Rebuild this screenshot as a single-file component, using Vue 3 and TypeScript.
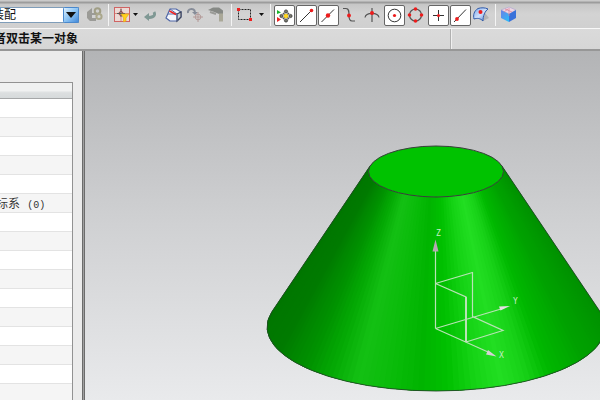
<script setup lang="ts">
import { ref } from 'vue'

interface Stop { angle: number; rgb: [number, number, number] }
interface Row { name: string; count: string }

const scope = ref('装配')
const rows: Row[] = Array.from({ length: 16 }, (_, i) =>
  i === 5 ? { name: '标系', count: '(0)' } : { name: '', count: '' },
)

const top = { cx: 436, cy: 171.5, rx: 67.5, ry: 25.5 }
const base = { cx: 436, cy: 327, rx: 169, ry: 64 }

// Surface shade by angle around the cone, from the right silhouette to the left.
const stops: Stop[] = [
  { angle: -20, rgb: [0, 140, 0] },
  { angle: 10, rgb: [0, 150, 0] },
  { angle: 30, rgb: [0, 162, 0] },
  { angle: 48, rgb: [0, 184, 0] },
  { angle: 58, rgb: [24, 210, 24] },
  { angle: 67, rgb: [34, 222, 34] },
  { angle: 76, rgb: [22, 212, 22] },
  { angle: 86, rgb: [0, 192, 0] },
  { angle: 95, rgb: [0, 180, 0] },
  { angle: 106, rgb: [10, 188, 10] },
  { angle: 118, rgb: [20, 192, 20] },
  { angle: 128, rgb: [4, 170, 4] },
  { angle: 140, rgb: [0, 145, 0] },
  { angle: 158, rgb: [0, 122, 0] },
  { angle: 200, rgb: [0, 116, 0] },
]

function shade(angle: number): string {
  const i = Math.max(1, stops.findIndex((s) => s.angle >= angle))
  const a = stops[i - 1]
  const b = stops[i]
  const t = (angle - a.angle) / (b.angle - a.angle)
  return `rgb(${a.rgb.map((v, k) => Math.round(v + (b.rgb[k] - v) * t)).join(',')})`
}

function at(e: typeof top, deg: number): string {
  const r = (deg * Math.PI) / 180
  return `${(e.cx + e.rx * Math.cos(r)).toFixed(2)},${(e.cy + e.ry * Math.sin(r)).toFixed(2)}`
}

// Each facet reaches under the next ones, so no background shows between them.
const facets: { points: string; fill: string }[] = []
for (let a = -14; a < 194; a += 2) {
  const end = Math.min(a + 6, 194)
  const outer: string[] = []
  for (let b = a; b <= end; b += 2) outer.push(at(base, b))
  facets.push({
    points: [at(top, a), ...outer, at(top, end)].join(' '),
    fill: shade(a + 1),
  })
}

const rim: string[] = []
for (let a = -14; a <= 194; a += 8) rim.push(at(base, a))
const outline = [at(top, -14), ...rim, at(top, 194)].join(' ')
</script>

<template>
  <div class="app">
    <header class="toolbar">
      <div class="combo">
        <select v-model="scope" aria-label="范围">
          <option>装配</option>
        </select>
        <svg class="drop" viewBox="0 0 16 16" aria-hidden="true">
          <defs>
            <linearGradient id="dropFill" x1="0" y1="0" x2="1" y2="1">
              <stop offset="0" stop-color="#e4f4ff" /><stop offset=".5" stop-color="#8cc4f4" /><stop offset="1" stop-color="#3f86d8" />
            </linearGradient>
          </defs>
          <rect x=".5" y=".5" width="15" height="15" rx="1" fill="url(#dropFill)" stroke="#4a88cc" />
          <path d="M3 5h10L8 11z" fill="#111" />
        </svg>
      </div>

      <button class="tool first" aria-label="组件">
        <svg viewBox="0 0 22 22"><path d="M3 8l5-4v5h4v2H8v3h4v3H6l-3-3z" fill="#9b9b97" /><g fill="none"><circle cx="13.500" cy="7" r="2.800" stroke="#a09e86" stroke-width="2" /><circle cx="15" cy="12.500" r="2.600" stroke="#aaa78c" stroke-width="2" /></g></svg>
      </button>
      <i class="sep"></i>
      <button class="tool" aria-label="选择过滤器">
        <svg viewBox="0 0 22 22"><rect x="3.500" y="3.500" width="15" height="14" fill="#ecd9d5" stroke="#cf6464" /><path d="M10 4v13M4 9.500h14" stroke="#d98a80" /><circle cx="10" cy="9.500" r="2" fill="none" stroke="#a44" /><path d="M10 5v8M6 9.500h8" stroke="#555" /><path d="M10 10h8l-3 4v3l-2.500 1v-4z" fill="#ffd21c" stroke="#e0a81a" stroke-width=".6" /></svg>
      </button>
      <button class="caret near" aria-label="更多过滤器"><svg viewBox="0 0 6 6"><path d="M0 1h5L2.500 4z" fill="#111" /></svg></button>
      <button class="tool" aria-label="返回">
        <svg viewBox="0 0 22 22"><path d="M15 8c2 4-1 5.500-7 5.500" fill="none" stroke="#7f9894" stroke-width="2.800" /><path d="M10 9v8l-5-4z" fill="#7f9894" /></svg>
      </button>
      <button class="tool apart" aria-label="面选择">
        <svg viewBox="0 0 22 22"><path d="M7 5l6 0 5 3v5l-4 4H7l-4-3z" fill="#f4f6fb" stroke="#5168a8" stroke-width="1.200" stroke-linejoin="round" /><path d="M14 10l4-2v5l-4 4z" fill="#c6cad2" stroke="#3e4457" stroke-width="1.200" /><path d="M5 10l9 0M7 5l7 5v7" fill="none" stroke="#5b6ea8" /><path d="M6.500 7l6.500 3.500" stroke="#e22" stroke-width="1.600" /></svg>
      </button>
      <button class="tool" aria-label="移动点">
        <svg viewBox="0 0 22 22"><path d="M3 9c-1-4 6-6 7-1" fill="none" stroke="#868c98" stroke-width="2" /><path d="M7 8h6l-3 3z" fill="#868c98" /><g fill="none" stroke="#b49a98"><circle cx="13" cy="13" r="2.800" /><path d="M13 8v10M8 13h10" /></g></svg>
      </button>
      <button class="tool" aria-label="应用样式">
        <svg viewBox="0 0 22 22"><path d="M1 6l5-2.500h6l4 3V10h-4L6 7.500z" fill="#868985" /><path d="M3 8l6 2" stroke="#9a9b97" stroke-width="2" /><path d="M12 9.500h4v8h-4z" fill="#aaa898" /></svg>
      </button>
      <i class="sep"></i>
      <button class="tool" aria-label="矩形选择">
        <svg viewBox="0 0 22 22"><rect x="4.500" y="5.500" width="12" height="10" fill="none" stroke="#222" stroke-dasharray="2 1" /><path d="M3 4h3v3H3zM15 14h3v3h-3z" fill="#ee2020" /></svg>
      </button>
      <button class="caret" aria-label="选择方式"><svg viewBox="0 0 6 6"><path d="M0 1h5L2.500 4z" fill="#111" /></svg></button>
      <i class="sep"></i>
      <button class="tool on" aria-label="启用捕捉点" aria-pressed="true">
        <svg viewBox="0 0 22 22"><path d="M4 6l4 2.500L4 10z" fill="#19b52c" /><path d="M4 13l4 2.500L4 18z" fill="#ec2222" /><g fill="#77776c" stroke="#333" stroke-width=".8"><circle cx="13" cy="7.500" r="1.600" /><circle cx="13" cy="16.500" r="1.600" /><circle cx="8.500" cy="12" r="1.600" /><circle cx="17.500" cy="12" r="1.600" /></g><path d="M10 9l6 6M16 9l-6 6" stroke="#555" stroke-width="1.600" /><circle cx="13" cy="12" r="2.200" fill="#ffd51e" /></svg>
      </button>
      <button class="tool on" aria-label="端点" aria-pressed="true">
        <svg viewBox="0 0 22 22"><path d="M5 18L16 7" stroke="#333" /><circle cx="16.500" cy="6.500" r="1.800" fill="#ed1c1c" /></svg>
      </button>
      <button class="tool on" aria-label="中点" aria-pressed="true">
        <svg viewBox="0 0 22 22"><path d="M4.500 18L17 5.500" stroke="#333" /><circle cx="11" cy="11.500" r="2.200" fill="#ed1c1c" /></svg>
      </button>
      <button class="tool" aria-label="控制点">
        <svg viewBox="0 0 22 22"><path d="M4 4.500h3c3 0 3 3 3 7s1 5.500 3 5.500h3" fill="none" stroke="#555" stroke-width="1.200" /><circle cx="10" cy="11.500" r="1.900" fill="#ed1c1c" /></svg>
      </button>
      <button class="tool" aria-label="交点">
        <svg viewBox="0 0 22 22"><path d="M11 4v14M4 13.500c1-5.500 13-5.500 14 0" fill="none" stroke="#555" stroke-width="1.200" /><circle cx="11" cy="9" r="2" fill="#ed1c1c" /></svg>
      </button>
      <button class="tool on" aria-label="圆弧中心" aria-pressed="true">
        <svg viewBox="0 0 22 22"><circle cx="11.500" cy="11.500" r="6.300" fill="none" stroke="#333" /><circle cx="11.500" cy="11.500" r="1.600" fill="#ed1c1c" /></svg>
      </button>
      <button class="tool" aria-label="象限点">
        <svg viewBox="0 0 22 22"><circle cx="10.500" cy="11" r="6" fill="none" stroke="#555" stroke-width="1.200" /><g fill="#ed1c1c"><circle cx="10.500" cy="5" r="1.800" /><circle cx="10.500" cy="17" r="1.800" /><circle cx="4.500" cy="11" r="1.800" /><circle cx="16.500" cy="11" r="1.800" /></g></svg>
      </button>
      <button class="tool on" aria-label="现有点" aria-pressed="true">
        <svg viewBox="0 0 22 22"><path d="M11.500 6v11M6 11.500h11" stroke="#333" /><circle cx="11.500" cy="11.500" r="1.500" fill="#ed1c1c" /></svg>
      </button>
      <button class="tool on" aria-label="曲线上的点" aria-pressed="true">
        <svg viewBox="0 0 22 22"><path d="M5 18L17 5.500" stroke="#333" /><circle cx="8" cy="15" r="1.900" fill="#ed1c1c" /></svg>
      </button>
      <button class="tool" aria-label="面上的点">
        <svg viewBox="0 0 22 22">
          <defs><linearGradient id="face" x1="0" y1="0" x2="1" y2="1"><stop offset="0" stop-color="#7ba9ed" /><stop offset=".5" stop-color="#cfe0fb" /><stop offset="1" stop-color="#4476ce" /></linearGradient></defs>
          <path d="M12 17l6-3-4-5z" fill="#b4b4b4" /><path d="M7 4.500c3-1 7-1 10 .5-3 2-5 7-5 12-3-3-6-3-9-2-1-4 0-8 4-10.500z" fill="url(#face)" stroke="#315aa8" /><circle cx="9.500" cy="8" r="2" fill="#ed1c1c" />
        </svg>
      </button>
      <i class="sep"></i>
      <button class="tool" aria-label="实体">
        <svg viewBox="0 0 22 22">
          <defs><linearGradient id="side" x1="0" y1="0" x2="1" y2="1"><stop offset="0" stop-color="#6c7fe4" /><stop offset="1" stop-color="#27c0fb" /></linearGradient></defs>
          <path d="M3 6l8-3 7 3-7 4z" fill="#eed6e2" stroke="#a7a1d0" stroke-width=".6" /><path d="M3 6l8 4v8l-8-4z" fill="url(#side)" /><path d="M18 6l-7 4v8l7-4z" fill="#3a72da" /><path d="M11 4v8M7 5l7 3M6 8l4-3" fill="none" stroke="#de7d92" stroke-width=".7" />
        </svg>
      </button>
    </header>

    <div class="prompt">
      <p class="cue">者双击某一对象</p>
      <p class="status"></p>
    </div>

    <main class="work">
      <aside class="navigator">
        <table aria-label="部件导航器">
          <thead><tr><th scope="col"></th></tr></thead>
          <tbody>
            <tr v-for="(row, i) in rows" :key="i">
              <td><template v-if="row.name">{{ row.name }} <span class="count">{{ row.count }}</span></template></td>
            </tr>
          </tbody>
        </table>
      </aside>
      <section class="viewport">
        <svg class="scene" viewBox="85 51 515 349" preserveAspectRatio="xMinYMin slice" role="img" aria-label="圆锥体">
          <polygon v-for="(f, i) in facets" :key="i" :points="f.points" :fill="f.fill" />
          <polyline :points="outline" fill="none" stroke="#234a27" stroke-width=".9" />
          <ellipse :cx="top.cx" :cy="top.cy" :rx="top.rx" :ry="top.ry" fill="#00c200" stroke="#383f3a" stroke-width="1" />
          <g class="frame">
            <path d="M435.500 328.500V250M435.500 328.500L501 309M435.500 328.500L488 352M435.500 283.500L472.500 272.500V316.500L503 330.500L466 342V297L435.500 283.500" />
            <path class="thick" d="M466 342V297" />
          </g>
          <path d="M435.500 239.500l3 12h-6z" fill="#b7a9b3" />
          <path d="M510 306l-9.500 4.500-1.500-4z" fill="#e6dfe4" />
          <path d="M496.500 356.500l-10.500-2 2-4.500z" fill="#d8d0d6" />
          <g class="axis">
            <text x="436" y="236">Z</text>
            <text x="513" y="304">Y</text>
            <text x="499" y="358">X</text>
          </g>
        </svg>
      </section>
    </main>
  </div>
</template>

<style>
body {
  margin: 0;
}
</style>

<style scoped>
.app {
  display: flex;
  flex-direction: column;
  height: 100vh;
  overflow: hidden;
  background: #d8d8d8;
  color: #111;
  font: 12px/18px "Liberation Sans", "Noto Sans CJK SC", sans-serif;
}

.toolbar {
  display: flex;
  flex: none;
  align-items: center;
  box-sizing: border-box;
  height: 28px;
  padding-top: 2px;
  background: linear-gradient(#cacaca 0 1px, #b4b4b4 1px 2px, #9c9c9c 2px 3px, #c6c6c6 4px, #d3d3d3 14px, #d0d0d0 27px);
}

.combo {
  position: relative;
  flex: none;
  width: 79px;
  height: 16px;
}

.combo select {
  display: block;
  box-sizing: border-box;
  width: 100%;
  height: 16px;
  padding: 0;
  border: 1px solid #7f9db9;
  border-left: 0;
  appearance: none;
  background: #fff;
  color: #111;
  font: inherit;
  line-height: 14px;
  text-indent: -8px;
}

.drop {
  position: absolute;
  top: 0;
  right: 0;
  width: 16px;
  height: 16px;
  pointer-events: none;
}

button {
  flex: none;
  box-sizing: border-box;
  padding: 0;
  border: 0;
  background: none;
}

.tool {
  position: relative;
  width: 22px;
  height: 22px;
}

.tool svg {
  position: relative;
  display: block;
  width: 22px;
  height: 22px;
}

.tool.on::before {
  content: "";
  position: absolute;
  inset: 1px 0 0 1px;
  border: 1px solid #666;
  border-radius: 2px;
  background: #fff;
}

.first {
  margin-left: 5px;
}

.apart {
  margin-left: 2px;
}

.caret {
  display: flex;
  align-items: center;
  justify-content: center;
  width: 12px;
  height: 20px;
}

.caret.near {
  width: 6px;
}

.caret svg {
  width: 6px;
  height: 6px;
}

.sep {
  flex: none;
  box-sizing: border-box;
  width: 5px;
  height: 22px;
  border: solid transparent;
  border-width: 0 2px;
  background: #f4f4f4;
  background-clip: padding-box;
}

.prompt {
  display: grid;
  flex: none;
  grid-template-columns: 1fr 149px;
  box-sizing: border-box;
  height: 23px;
  border-top: 1px solid #f8f8f8;
  border-bottom: 2px solid #979797;
  background: linear-gradient(#dadada, #d6d6d6);
}

.prompt p {
  margin: 0;
}

.cue {
  overflow: hidden;
  border-right: 1px solid #b0b0b0;
  font-weight: bold;
  line-height: 20px;
  white-space: nowrap;
  text-indent: -6px;
}

.status {
  border-left: 1px solid #f0f0f0;
}

.work {
  display: flex;
  flex: 1;
  gap: 1px;
  min-height: 0;
  background: #a0a0a0;
}

.navigator {
  flex: none;
  box-sizing: border-box;
  width: 83px;
  padding: 31px 9px 0 0;
  overflow: hidden;
  border-right: 1px solid #6c6c6c;
  background: #ebebeb;
}

table {
  width: 100%;
  border: solid #929292;
  border-width: 1px 1px 0 0;
  border-spacing: 0;
  table-layout: fixed;
}

th,
td {
  box-sizing: border-box;
  padding: 0;
}

th {
  height: 16px;
  border-bottom: 1px solid #a5a7a8;
  background: linear-gradient(#f0f1f1 0 50%, #dcdfe0 65%, #d6dadb);
}

td {
  height: 19px;
  padding-top: 2px;
  overflow: hidden;
  border-bottom: 1px solid #e3e3e3;
  background: #fff;
  color: #333;
  line-height: 16px;
  white-space: pre;
  text-indent: -4px;
}

.count {
  padding-left: 4px;
  font: 10px/12px "Liberation Mono", monospace;
}

tr:nth-child(even) td {
  background: #f5f5f5;
}

.viewport {
  flex: 1;
  min-width: 0;
  border-left: 1px solid #6c6c6c;
  background: linear-gradient(#b3b4b6, #d0d1d3 50%, #e9eaec);
}

.scene {
  display: block;
  width: 100%;
  height: 100%;
}

.frame {
  fill: none;
  stroke: #b9e3b6;
  stroke-width: 1.2px;
}

.thick {
  stroke-width: 2px;
}

.axis {
  fill: #c9eec8;
  font: 8px "DejaVu Sans Mono", monospace;
}
</style>
